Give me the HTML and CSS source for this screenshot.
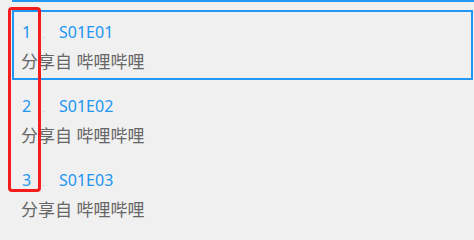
FILE: index.html
```html
<!DOCTYPE html>
<html lang="zh-CN">
<head>
<meta charset="utf-8">
<link rel="stylesheet" href="styles.css">
</head>
<body>
<div class="list">
  <div class="topline"></div>
  <div class="item selected">
    <div class="title-row"><span class="idx">1<span class="dot">.</span></span><span class="name">S01E01</span></div>
    <div class="sub">分享自 哔哩哔哩</div>
  </div>
  <div class="item">
    <div class="title-row"><span class="idx">2<span class="dot">.</span></span><span class="name">S01E02</span></div>
    <div class="sub">分享自 哔哩哔哩</div>
  </div>
  <div class="item">
    <div class="title-row"><span class="idx">3<span class="dot">.</span></span><span class="name">S01E03</span></div>
    <div class="sub">分享自 哔哩哔哩</div>
  </div>
</div>
<div class="highlight"></div>
</body>
</html>
```
FILE: styles.css
```css
html, body {
  margin: 0;
  padding: 0;
  background: #f0f0f0;
  width: 474px;
  height: 233px;
  overflow: hidden;
}
body {
  position: relative;
  font-family: "Noto Sans", "Noto Sans CJK SC", sans-serif;
}
.list {
  padding-left: 12px;
}
.topline {
  height: 2px;
  background: #2196f3;
  margin-bottom: 8px;
}
.item {
  box-sizing: border-box;
  height: 70px;
  width: 461px;
  border: 2px solid transparent;
  padding: 9px 8px 0 7px;
  margin-bottom: 4px;
}
.item.selected {
  border-color: #2196f3;
}
.title-row {
  display: flex;
  align-items: baseline;
  font-size: 16px;
  line-height: 22px;
  color: #2196f3;
  padding-left: 1px;
}
.idx {
  display: flex;
  align-items: baseline;
  width: 37px;
  flex: none;
}
.dot {
  color: #b8bcc4;
  font-size: 9px;
  margin-left: 11px;
}
.sub {
  font-size: 17px;
  line-height: 22px;
  margin-top: 5px;
  color: #666666;
}
.highlight {
  position: absolute;
  left: 8px;
  top: 7px;
  width: 33px;
  height: 185px;
  box-sizing: border-box;
  border: 3px solid #f41c1c;
  border-radius: 4px;
}
```
